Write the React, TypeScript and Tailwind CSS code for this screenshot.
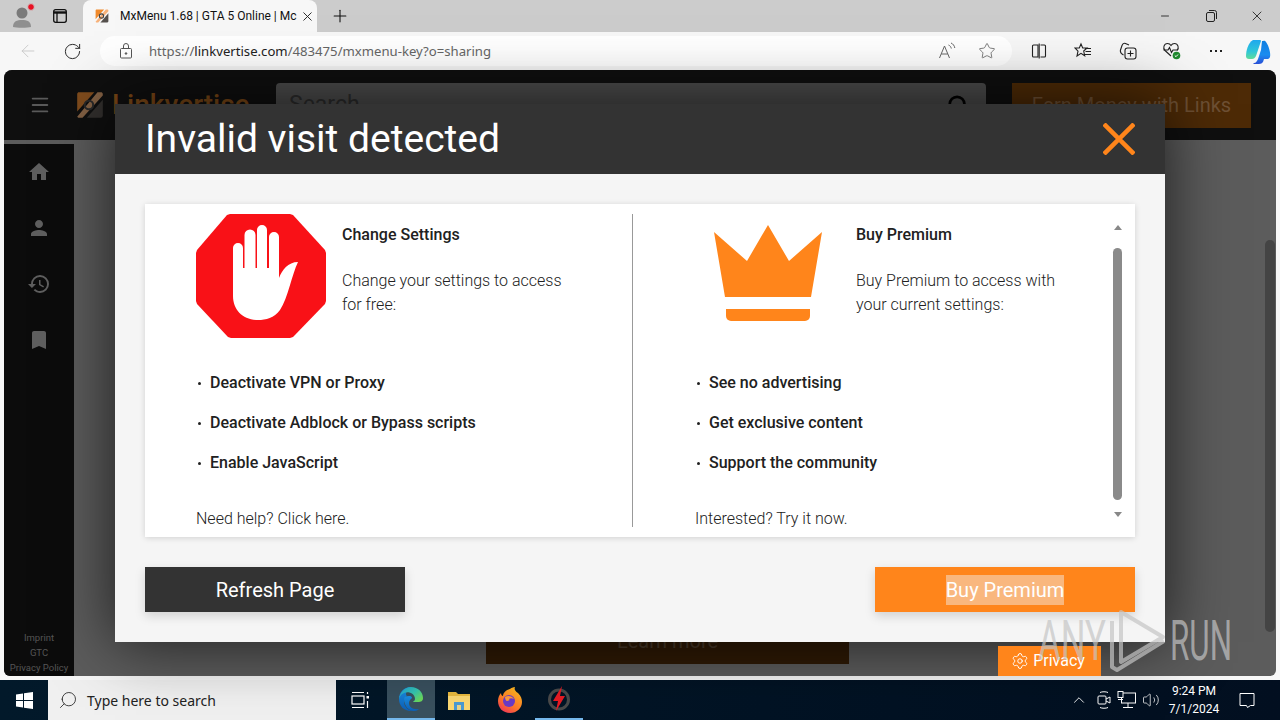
import { ArrowLeft, ChevronUp, Menu, Minus, Plus, RotateCw, Search, Settings, Star, Volume2, X } from "lucide-react";
import { MdBookmark, MdHistory, MdHome, MdPerson } from "react-icons/md";

const LinkLogo = ({ size, dim }: { size: number; dim?: boolean }) => (
  <svg width={size} height={size} viewBox="0 0 30 30" className={dim ? "opacity-50" : ""}>
    <path d="M4 3h15L3 21V5a2 2 0 0 1 1-2Z" fill="#f08a2c" />
    <path d="M22 3h4a2 2 0 0 1 1 2v1L8 27H4l-1-1Z" fill="#f7b27a" />
    <path d="M27 10v15a2 2 0 0 1-2 2H12Z" fill="#55504c" />
    <circle cx="14" cy="15" r="4" fill="none" stroke="#444" strokeWidth="2" />
  </svg>
);

const ProfileIcon = () => (
  <svg width="26" height="26" viewBox="0 0 26 26">
    <circle cx="11" cy="10" r="5.5" fill="#7a7a7a" />
    <path d="M2 24c0-6 4-7 9-7s9 1 9 7c-3 1-15 1-18 0Z" fill="#8f8f8f" />
    <circle cx="20" cy="4" r="3.4" fill="#e81123" stroke="#ccc" />
  </svg>
);

const TabsIcon = () => (
  <svg width="16" height="16" viewBox="0 0 16 16" fill="none" stroke="#111" strokeWidth="1.3">
    <rect x="1.7" y="1.7" width="12.6" height="12.6" rx="2" />
    <path d="M1.7 4.5h12.6" strokeWidth="2.4" />
    <path d="M5 4.5v9.5" />
  </svg>
);

const RestoreIcon = () => (
  <svg width="11" height="12" viewBox="0 0 11 12" fill="none" stroke="#222">
    <rect x="0.5" y="2.5" width="8" height="9" rx="1.5" />
    <path d="M3 .5h5.5a2 2 0 0 1 2 2V9" />
  </svg>
);

const LockIcon = () => (
  <svg width="14" height="16" viewBox="0 0 14 16" fill="none" stroke="#555">
    <rect x="1.5" y="5.5" width="11" height="9.5" rx="1" />
    <path d="M4.5 5.5V3a2.5 2.5 0 0 1 5 0v2.5" />
    <circle cx="7" cy="10.5" r="0.8" fill="#555" />
  </svg>
);

const ReadAloudIcon = () => (
  <svg width="18" height="18" viewBox="0 0 18 18" fill="none" stroke="#666">
    <path d="M1.5 16 6.5 4l5 12M3.3 12h6.4" />
    <path d="M10.5 3c1.5.5 2.5 2 2.8 3.5M13 1c2 .8 3.5 2.8 3.8 5" />
  </svg>
);

const SplitIcon = () => (
  <svg width="16" height="16" viewBox="0 0 16 16" fill="none" stroke="#222" strokeWidth="1.1">
    <path d="M7 2H2.500a1 1 0 0 0-1 1v10a1 1 0 0 0 1 1H7ZM9.500 2h4a1 1 0 0 1 1 1v10a1 1 0 0 1-1 1h-4" />
    <path d="M8.200 .5v15" />
  </svg>
);

const FavoritesIcon = () => (
  <svg width="18" height="18" viewBox="0 0 18 18" fill="none" stroke="#222" strokeWidth="1.1">
    <path d="m7 2 1.700 4H13l-3.300 3 1 4.800L7 11.300l-4 2.700 1-4.800L1 6h4.300Z" />
    <path d="M11 6.500h6M11.500 9.500h5.500M11 12.500h6" />
  </svg>
);

const CollectionsIcon = () => (
  <svg width="18" height="18" viewBox="0 0 18 18" fill="none" stroke="#222" strokeWidth="1.1">
    <path d="M4.500 13C2.500 12 1 10 1.500 8L3 3.500C3.500 2 5 1 6.500 1.500L10 3" />
    <rect x="6" y="6" width="11" height="11" rx="2.500" />
    <path d="M11.500 8.500v6M8.500 11.500h6" />
  </svg>
);

const HealthIcon = () => (
  <svg width="20" height="20" viewBox="0 0 20 20" fill="none">
    <path
      d="M9 15 3 9.500C.500 7 2 2.500 5.500 2.500 7.200 2.500 8.300 3.300 9 4.500c.7-1.200 1.800-2 3.500-2C16 2.500 17.500 7 15 9.500"
      stroke="#222"
      strokeWidth="1.100"
    />
    <path d="M1.500 9H6l1.500-2.500 2 5L11 9h4" stroke="#222" strokeWidth="1.100" />
    <circle cx="14.500" cy="14.500" r="3.800" fill="#1f8a2e" />
    <path d="m12.800 14.500 1.200 1.200 2-2.200" stroke="#fff" />
  </svg>
);

const CopilotIcon = () => (
  <svg width="26" height="26" viewBox="0 0 26 26">
    <defs>
      <linearGradient id="copilotA" x1="0" y1="0" x2="0" y2="1">
        <stop offset="0" stopColor="#1fa8ee" />
        <stop offset="0.600" stopColor="#2fc6d8" />
        <stop offset="1" stopColor="#5fdc9a" />
      </linearGradient>
      <linearGradient id="copilotB" x1="0" y1="0" x2="0" y2="1">
        <stop offset="0" stopColor="#0f7fe0" />
        <stop offset="0.600" stopColor="#1a8cf0" />
        <stop offset="1" stopColor="#2a4fd6" />
      </linearGradient>
    </defs>
    <path d="M8 2h7c1 0 1 1 1 1l-5 15c-1 2-2 3-4 3H4c-2 0-3-1-3-3 0-5 2-13 7-16Z" fill="url(#copilotA)" />
    <path d="M17 3c1 0 3-1 4 1 3 4 5 12 4 15-1 2-2 2-3 2h-3l-1 3c-1 1-2 2-4 2H9c-1 0-1-1 0-1 2 0 3-2 4-4l3-9 1-9Z" fill="url(#copilotB)" />
  </svg>
);

const StopIcon = () => (
  <svg width="130" height="124" viewBox="0 0 130 124" className="shrink-0">
    <path
      d="M34 0h60l3 1 32 35 1 3v48l-1 3-32 33-3 1H35l-3-1L1 90l-1-3V39l1-3L31 1Z"
      fill="#f91117"
    />
    <path
      d="M37 34a5 5 0 0 1 10 0v20h1.500V21a5.500 5.500 0 0 1 11 0v33H61V16a5 5 0 0 1 10 0v38h2V23a5 5 0 0 1 10 0v41c3-8 9-16 19-16-6 12-10 36-18 48-6 8-14 10-22 10-15 0-25-10-25-24Z"
      fill="#fff"
    />
  </svg>
);

const CrownIcon = () => (
  <svg width="108" height="97" viewBox="0 0 108 97" className="ml-[19px] mt-[11px] shrink-0">
    <path d="M0 7 33 36 54 0l21 36L108 7 97 72H11Z" fill="#ff851b" />
    <path d="M12 84h84v7a5 5 0 0 1-5 5H17a5 5 0 0 1-5-5Z" fill="#ff851b" />
  </svg>
);

const PlayMark = () => (
  <svg width="58" height="64" viewBox="0 0 58 64" fill="none" stroke="#c4c4c4" strokeOpacity="0.7" strokeWidth="4">
    <path d="M12 3 54 28 12 53Z" strokeLinejoin="round" />
    <path d="M3 12v46l5 3 47-29" strokeLinejoin="round" />
  </svg>
);

const WindowsLogo = () => (
  <svg width="17" height="17" viewBox="0 0 17 17" fill="#fff">
    <path d="M0 2.500 7 1.500v6.500H0ZM8 1.300 17 0v8H8ZM0 9h7v6.500l-7-1ZM8 9h9v8l-9-1.300Z" />
  </svg>
);

const TaskViewIcon = () => (
  <svg width="18" height="18" viewBox="0 0 18 18" fill="none" stroke="#fff" strokeWidth="1.200">
    <path d="M1 1.500h12M1 16.500h12" />
    <rect x="1" y="5" width="12" height="8" />
    <rect x="15.500" y="5" width="2.500" height="2.500" fill="#fff" stroke="none" />
    <path d="M16.500 1v2M16.500 10v7" />
  </svg>
);

const EdgeIcon = () => (
  <svg width="26" height="26" viewBox="0 0 26 26">
    <defs>
      <linearGradient id="edgeA" x1="0" y1="0" x2="1" y2="0.700">
        <stop offset="0" stopColor="#1f9fd8" />
        <stop offset="0.600" stopColor="#35c6b0" />
        <stop offset="1" stopColor="#6bd85a" />
      </linearGradient>
      <linearGradient id="edgeB" x1="0" y1="0" x2="0" y2="1">
        <stop offset="0" stopColor="#1b8fe2" />
        <stop offset="1" stopColor="#0c5fb8" />
      </linearGradient>
    </defs>
    <path d="M1 13C1 6 6 1 13 1c-5 3-6 8-4 9-2 1-3 4-3 6 0 5 5 9 10 9l5-2c-2 1-4 2-8 2C6 25 1 20 1 13Z" fill="url(#edgeB)" />
    <path d="M6 13c0 7 5 12 10 12 2 0 4-1 5-2-6 1-10-2-10-6 0-2 1-3 2-4 2-1 1-3-2-3-3 0-5 1-5 3Z" fill="url(#edgeB)" />
    <path d="M13 1c7 0 12 5 12 11 0 3-2 4-5 4h-5c0-1 2-1 2-3 0-5-6-8-11-6-3 1-4 3-5 6C2 6 7 1 13 1Z" fill="url(#edgeA)" />
  </svg>
);

const FolderIcon = () => (
  <svg width="24" height="22" viewBox="0 0 24 22">
    <path d="M1 3h8l2 2h12v15H1Z" fill="#e8b93e" />
    <path d="M1 7h22v14H1Z" fill="#fbd872" />
    <path d="M7 13h10v8H7Z" fill="#4a9bd4" />
    <path d="M10 16h4v5h-4Z" fill="#e8d48a" />
  </svg>
);

const FirefoxIcon = () => (
  <svg width="26" height="26" viewBox="0 0 26 26">
    <defs>
      <linearGradient id="foxA" x1="0.800" y1="0" x2="0.200" y2="1">
        <stop offset="0" stopColor="#ffc020" />
        <stop offset="0.600" stopColor="#ff7a28" />
        <stop offset="1" stopColor="#f0345a" />
      </linearGradient>
    </defs>
    <path d="M13 2c1-1 3-2 5-2-1 2 0 4 3 6 3 3 4 6 4 9 0 6-5 11-12 11S1 21 1 14c0-3 1-6 3-8 0 2 1 3 2 3 0-3 3-6 7-7Z" fill="url(#foxA)" />
    <circle cx="12" cy="14" r="6" fill="#6a3bc8" />
    <path d="M8 10c3-2 7-1 9 2-2-1-4-1-5 0 1 1 0 2-2 2-1 0-2-2-2-4Z" fill="#ff9a3c" />
  </svg>
);

const FlashIcon = () => (
  <svg width="24" height="26" viewBox="0 0 24 26">
    <circle cx="12" cy="13.500" r="9.500" fill="none" stroke="#4a4a4a" strokeWidth="3" />
    <path d="M15 0 6 15h5l-2 10 9-15h-5Z" fill="#e81b23" />
  </svg>
);

const MeetIcon = () => (
  <svg width="14" height="20" viewBox="0 0 14 20" fill="none" stroke="#fff" strokeWidth="1">
    <path d="M3 2.500c2-1 6-1 8 0M3 17.500c2 1 6 1 8 0" />
    <rect x="1" y="6" width="8" height="8" rx="1" />
    <path d="m9 9 4-2v6l-4-2" />
  </svg>
);

const NetworkIcon = () => (
  <svg width="20" height="18" viewBox="0 0 20 18" fill="none" stroke="#fff" strokeWidth="1">
    <rect x="4.500" y="2" width="14" height="10" />
    <rect x="1" y="0.500" width="5" height="6" fill="#021428" />
    <path d="M11 12v4M6 16.500h10M1 8.500h5" />
  </svg>
);

const SidebarLinks = [MdHome, MdPerson, MdHistory, MdBookmark];

const TabBar = () => (
  <div className="flex h-[32px] shrink-0 items-center bg-[#cccccc]">
    <div className="ml-[11px] flex w-[26px] justify-center">
      <ProfileIcon />
    </div>
    <div className="ml-[15px] flex w-[16px] justify-center">
      <TabsIcon />
    </div>
    <div className="ml-[15px] flex h-[32px] w-[234px] items-center rounded-t-lg bg-[#f7f7f7] pl-[11px]">
      <LinkLogo size={16} />
      <span className="ml-[10px] w-[178px] overflow-hidden whitespace-nowrap font-['Roboto',sans-serif] text-[12px] text-[#111]">
        MxMenu 1.68 | GTA 5 Online | Mc
      </span>
      <X size={15} strokeWidth={1.5} className="ml-[2px] text-[#222]" />
    </div>
    <Plus size={20} strokeWidth={1.3} className="ml-[13px] text-[#111]" />
    <div className="ml-auto flex items-center">
      <div className="flex w-[46px] justify-center">
        <Minus size={12} strokeWidth={1.6} className="text-[#111]" />
      </div>
      <div className="flex w-[46px] justify-center">
        <RestoreIcon />
      </div>
      <div className="flex w-[46px] justify-center">
        <X size={16} strokeWidth={1.2} className="text-[#111]" />
      </div>
    </div>
  </div>
);

const AddressBar = () => (
  <div className="flex h-[38px] shrink-0 items-center bg-[#f7f7f7]">
    <ArrowLeft size={20} strokeWidth={1} className="ml-[18px] text-[#c4c4c4]" />
    <RotateCw size={19} strokeWidth={1.2} className="ml-[25px] text-[#222]" />
    <div className="ml-[18px] flex h-[30px] w-[912px] items-center rounded-full bg-white pl-[19px]">
      <LockIcon />
      <span className="ml-[16px] pt-[1px] text-[13.150px] text-[#666]">
        https://<span className="text-[#222]">linkvertise.com</span>/483475/mxmenu-key?o=sharing
      </span>
      <div className="ml-auto mr-[16px] flex items-center gap-[22px]">
        <ReadAloudIcon />
        <Star size={18} strokeWidth={1} className="text-[#555]" />
      </div>
    </div>
    <div className="ml-[19px] flex w-[16px] justify-center">
      <SplitIcon />
    </div>
    <div className="ml-[27px] flex w-[18px] justify-center">
      <FavoritesIcon />
    </div>
    <div className="ml-[27px] flex w-[18px] justify-center">
      <CollectionsIcon />
    </div>
    <div className="ml-[25px] flex w-[20px] justify-center">
      <HealthIcon />
    </div>
    <div className="ml-[25px] flex w-[18px] justify-center gap-[3px]">
      <span className="h-[2px] w-[2px] bg-[#222]" />
      <span className="h-[2px] w-[2px] bg-[#222]" />
      <span className="h-[2px] w-[2px] bg-[#222]" />
    </div>
    <div className="ml-[20px]">
      <CopilotIcon />
    </div>
  </div>
);

const SiteBehind = () => (
  <div className="mx-[4px] flex h-[606px] shrink-0 flex-col overflow-hidden rounded-t-lg rounded-b-md bg-[#5c5c5c]">
    <div className="flex h-[70px] shrink-0 items-center bg-[#0f0f0f]">
      <Menu size={22} strokeWidth={2} className="ml-[25px] text-[#5a5a5a]" />
      <div className="ml-[23px]">
        <LinkLogo size={32} dim />
      </div>
      <span className="ml-[6px] w-[164px] whitespace-nowrap text-[28px] font-medium text-[#7a4716]">Linkvertise</span>
      <div className="flex h-[45px] w-[710px] items-center justify-between rounded-t-sm bg-[#4a4a4a] px-[13px]">
        <span className="text-[23px] text-[#2c2c2c]">Search</span>
        <Search size={22} strokeWidth={3} className="mr-[4px] text-black" />
      </div>
      <div className="ml-[26px] flex h-[45px] w-[239px] items-center justify-center bg-[#4d2a06] text-[20px] text-[#6e5034]">
        Earn Money with Links
      </div>
    </div>
    <div className="mt-[4px] flex min-h-0 flex-1">
      <div className="flex w-[70px] shrink-0 flex-col items-center bg-[#0c0c0c]">
        <div className="mt-[16px] flex flex-col gap-[32px]">
          {SidebarLinks.map((Icon, i) => (
            <Icon key={i} size={24} className="text-[#5f5f5f]" />
          ))}
        </div>
        <div className="mt-auto flex flex-col items-center gap-[3px] pb-[2px] text-[9.500px] leading-[12px] text-[#555]">
          <span>Imprint</span>
          <span>GTC</span>
          <span>Privacy Policy</span>
        </div>
      </div>
      <div className="flex flex-1 flex-col">
        <div className="flex flex-1 justify-end">
          <div className="mr-[1px] mt-[96px] h-[392px] w-[10px] rounded-full bg-[#444]" />
        </div>
        <div className="mb-[12px] ml-[412px] flex h-[30px] w-[363px] items-center justify-center bg-[#2f1a05] pb-[16px] text-[20px] text-[#4a3a2a]">
          Learn more
        </div>
      </div>
    </div>
  </div>
);

const Bullets = ({ items }: { items: string[] }) => (
  <ul className="mt-[33px] flex shrink-0 flex-col gap-[16px]">
    {items.map((item) => (
      <li key={item} className="flex items-center font-medium leading-[24px] text-[#212121]">
        <span className="ml-[2px] mr-[9px] h-[3px] w-[3px] rounded-full bg-[#212121]" />
        {item}
      </li>
    ))}
  </ul>
);

const Blurb = ({ title, lines }: { title: string; lines: string[] }) => (
  <div className="pt-[9px] leading-[24px] text-[#212121]">
    <div className="font-medium">{title}</div>
    <div className="mt-[22px] font-light">
      {lines.map((l) => (
        <div key={l}>{l}</div>
      ))}
    </div>
  </div>
);

const Modal = () => (
  <div className="absolute left-[115px] top-[104px] w-[1050px] font-['Roboto',sans-serif] shadow-[0_0_60px_rgba(0,0,0,0.7)]">
    <div className="flex h-[70px] items-center justify-between bg-[#333333] pl-[30px] pr-[30px]">
      <h1 className="pt-[1px] text-[39px] font-normal text-white">Invalid visit detected</h1>
      <svg width="32" height="32" viewBox="0 0 32 32" stroke="#ff851b" strokeWidth="4.500">
        <path d="M1 1 31 31M31 1 1 31" />
      </svg>
    </div>
    <div className="flex flex-col gap-[30px] bg-[#f5f5f5] p-[30px]">
      <div className="flex h-[333px] bg-white py-[10px] text-[16px] shadow-[0_1px_6px_rgba(0,0,0,0.15)]">
        <div className="flex h-[313px] w-[488px] shrink-0 flex-col border-r border-[#999] pl-[51px]">
          <div className="flex h-[124px] shrink-0">
            <StopIcon />
            <div className="ml-[16px]">
              <Blurb title="Change Settings" lines={["Change your settings to access", "for free:"]} />
            </div>
          </div>
          <Bullets items={["Deactivate VPN or Proxy", "Deactivate Adblock or Bypass scripts", "Enable JavaScript"]} />
          <div className="mt-[32px] shrink-0 font-light leading-[24px] text-[#212121]">Need help? Click here.</div>
        </div>
        <div className="flex h-[313px] w-[480px] shrink-0 flex-col pl-[62px]">
          <div className="flex h-[124px] shrink-0">
            <CrownIcon />
            <div className="ml-[34px]">
              <Blurb title="Buy Premium" lines={["Buy Premium to access with", "your current settings:"]} />
            </div>
          </div>
          <Bullets items={["See no advertising", "Get exclusive content", "Support the community"]} />
          <div className="mt-[32px] shrink-0 font-light leading-[24px] text-[#212121]">Interested? Try it now.</div>
        </div>
        <div className="flex w-[9px] shrink-0 flex-col items-center">
          <span className="mt-[11px] h-0 w-0 border-x-[4.5px] border-b-[5px] border-x-transparent border-b-[#888]" />
          <span className="mt-[18px] h-[252px] w-[9px] shrink-0 rounded-full bg-[#8a8a8a]" />
          <span className="mt-[12px] h-0 w-0 border-x-[4.5px] border-t-[5px] border-x-transparent border-t-[#888]" />
        </div>
      </div>
      <div className="flex justify-between text-[20px]">
        <button className="flex h-[45px] w-[260px] items-center justify-center bg-[#333333] text-white shadow-[0_4px_10px_rgba(0,0,0,0.15)]">
          Refresh Page
        </button>
        <button className="flex h-[45px] w-[260px] items-center justify-center bg-[#ff851b] text-white shadow-[0_4px_10px_rgba(0,0,0,0.15)]">
          <span className="bg-[#f9b77e] leading-[30px]">Buy Premium</span>
        </button>
      </div>
    </div>
  </div>
);

const PrivacyButton = () => (
  <div className="absolute left-[998px] top-[646px] flex h-[30px] w-[103px] items-center justify-center gap-[4px] bg-[#ff851b] pr-[3px] font-['Roboto',sans-serif] text-[16px] text-white">
    <Settings size={18} strokeWidth={1.3} />
    Privacy
  </div>
);

const Watermark = () => (
  <div className="pointer-events-none absolute left-[1038px] top-[609px] flex h-[64px] items-center font-['Roboto',sans-serif] text-[56px] font-normal leading-none text-[#c4c4c4]/70">
    <span className="w-[71px] origin-left scale-x-[0.62] whitespace-nowrap">ANY</span>
    <PlayMark />
    <span className="ml-[3px] w-[60px] origin-left scale-x-[0.56] whitespace-nowrap">RUN</span>
  </div>
);

const TaskBar = () => (
  <div className="flex h-[40px] shrink-0 items-center bg-gradient-to-r from-[#02192a] to-[#020f20] font-['Noto_Sans',sans-serif] text-white">
    <div className="flex w-[48px] justify-center">
      <WindowsLogo />
    </div>
    <div className="flex h-[40px] w-[288px] items-center bg-[#f0f0f0] pl-[10px] text-[#222]">
      <Search size={20} strokeWidth={1} className="-scale-x-100" />
      <span className="ml-[9px] text-[14px]">Type here to search</span>
    </div>
    <div className="ml-[15px] flex w-[18px] justify-center">
      <TaskViewIcon />
    </div>
    <div className="ml-[18px] flex h-[40px] w-[48px] items-center justify-center border-b-[2px] border-[#76b9ed] bg-[#39505e]">
      <EdgeIcon />
    </div>
    <div className="flex w-[48px] justify-center">
      <FolderIcon />
    </div>
    <div className="ml-[1px] flex w-[51px] justify-center">
      <FirefoxIcon />
    </div>
    <div className="flex h-[40px] w-[48px] items-center justify-center border-b-[2px] border-[#76b9ed]">
      <FlashIcon />
    </div>
    <div className="ml-auto flex items-center">
      <ChevronUp size={18} strokeWidth={1.2} />
      <div className="ml-[9px]">
        <MeetIcon />
      </div>
      <div className="ml-[6px]">
        <NetworkIcon />
      </div>
      <Volume2 size={18} strokeWidth={1} className="ml-[5px]" />
      <div className="ml-[4px] flex w-[60px] flex-col items-center font-['Roboto',sans-serif] text-[12px] leading-[18px]">
        <span>9:24 PM</span>
        <span>7/1/2024</span>
      </div>
      <svg width="20" height="20" viewBox="0 0 20 20" fill="none" stroke="#fff" className="ml-[13px] mr-[23px]">
        <path d="M3 3.500h14v12h-3.500l-3 2-1-2H3Z" />
      </svg>
    </div>
  </div>
);

export default function App() {
  return (
    <div className="relative flex h-[720px] w-[1280px] flex-col overflow-hidden bg-[#f7f7f7] font-['Noto_Sans',sans-serif]">
      <TabBar />
      <AddressBar />
      <div className="font-['Roboto',sans-serif]">
        <SiteBehind />
      </div>
      <div className="h-[4px] shrink-0 bg-[#f7f7f7]" />
      <TaskBar />
      <Modal />
      <PrivacyButton />
      <Watermark />
    </div>
  );
}
